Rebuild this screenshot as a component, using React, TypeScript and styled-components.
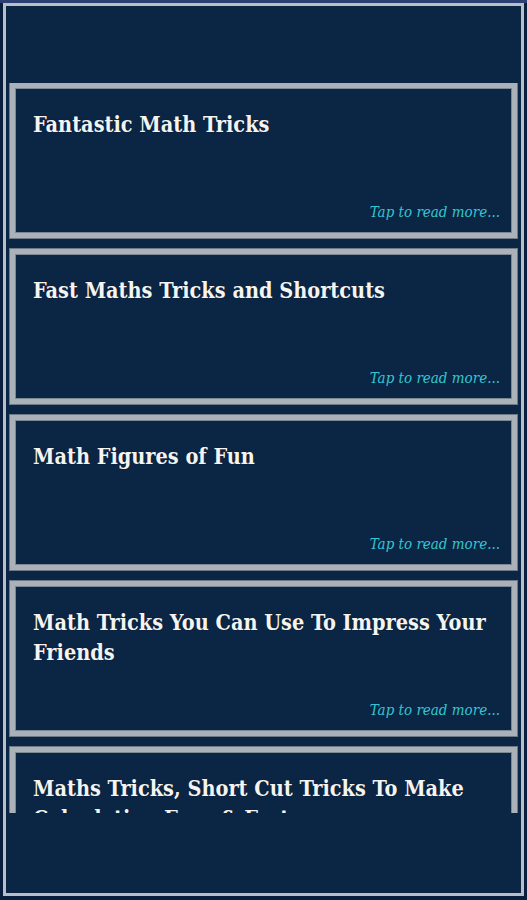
import React from "react";
import styled, { createGlobalStyle } from "styled-components";

const Global = createGlobalStyle`
  html, body { margin: 0; padding: 0; }
  body {
    background: #0a1f3d;
    border-top: 3px solid #2c3f72;
    font-family: "DejaVu Serif Condensed", "DejaVu Serif", "Liberation Serif", serif;
  }
`;

const Frame = styled.div`
  margin: 0 3px;
  height: 887px;
  border: 3px solid #b7bfc8;
  background: #0b2545;
  display: flex;
  flex-direction: column;
`;

const Header = styled.div`
  height: 77px;
  flex: none;
`;

const List = styled.div`
  height: 730px;
  flex: none;
  overflow: hidden;
  padding: 0 4px;
  display: flex;
  flex-direction: column;
  gap: 11px;
`;

const Card = styled.div`
  flex: none;
  height: 155px;
  box-sizing: border-box;
  border: 5px solid #aab1b9;
  box-shadow: inset 0 0 0 1px #7d8792, 0 0 0 1px #6f7884;
  background: #0b2545;
  display: flex;
  flex-direction: column;
  justify-content: space-between;
  padding: 22px 12px 11px 18px;
`;

const Title = styled.div`
  color: #f4f4f2;
  font-weight: bold;
  font-size: 21.5px;
  line-height: 30px;
  text-shadow: 0 0 1px rgba(0,0,0,0.6);
`;

const More = styled.div`
  color: #35c6cf;
  font-style: italic;
  font-size: 15px;
  line-height: 20px;
  text-align: right;
`;

const items = [
  "Fantastic Math Tricks",
  "Fast Maths Tricks and Shortcuts",
  "Math Figures of Fun",
  "Math Tricks You Can Use To Impress Your Friends",
  "Maths Tricks, Short Cut Tricks To Make Calculation Easy & Fast",
];

export default function App() {
  return (
    <>
      <Global />
      <Frame>
        <Header />
        <List>
          {items.map((t) => (
            <Card key={t}>
              <Title>{t}</Title>
              <More>Tap to read more...</More>
            </Card>
          ))}
        </List>
      </Frame>
    </>
  );
}
